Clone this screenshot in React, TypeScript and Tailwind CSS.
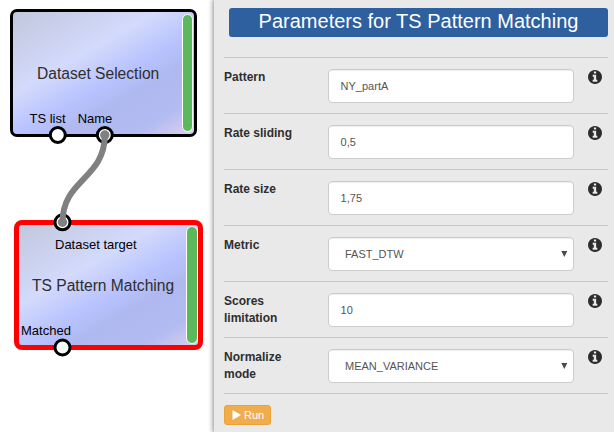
import type { ReactNode } from "react";

type FieldProps = { label: string; value: string; select?: boolean };

const fields: FieldProps[] = [
  { label: "Pattern", value: "NY_partA" },
  { label: "Rate sliding", value: "0,5" },
  { label: "Rate size", value: "1,75" },
  { label: "Metric", value: "FAST_DTW", select: true },
  { label: "Scores limitation", value: "10" },
  { label: "Normalize mode", value: "MEAN_VARIANCE", select: true },
];

function InfoIcon() {
  return (
    <svg className="size-[14px] shrink-0" viewBox="0 0 1536 1536" fill="#2d2d2d">
      <path d="M1024 1248v-160q0-14-9-23t-23-9h-96V544q0-14-9-23t-23-9H544q-14 0-23 9t-9 23v160q0 14 9 23t23 9h96v320h-96q-14 0-23 9t-9 23v160q0 14 9 23t23 9h448q14 0 23-9t9-23zM896 352V192q0-14-9-23t-23-9H672q-14 0-23 9t-9 23v160q0 14 9 23t23 9h192q14 0 23-9t9-23zm640 416q0 209-103 385.500T1153.500 1433 768 1536t-385.500-103T103 1153.500 0 768t103-385.500T382.500 103 768 0t385.500 103T1433 382.500 1536 768z" />
    </svg>
  );
}

function Field({ label, value, select }: FieldProps) {
  return (
    <div className="grid h-[56px] grid-cols-[104px_246px_34px] items-start border-t border-[#c8c8c8]">
      <div className="pt-[11px] pr-8 text-[12px] leading-[17px] font-bold">{label}</div>
      <div
        className={`mt-[11px] flex h-[34px] items-center justify-between rounded border border-[#ccc] bg-white text-[11px] text-[#555] shadow-[inset_0_1px_1px_rgba(0,0,0,0.075)] ${select ? "pr-[5px] pl-4" : "px-[11.600px]"}`}
      >
        <span>{value}</span>
        {select && (
          <svg className="mb-px h-[6px] w-[7px]" viewBox="0 0 7 6" fill="#4b4b4b">
            <path d="M0.300 0h6L3.300 6z" />
          </svg>
        )}
      </div>
      <div className="flex pt-[11.500px] pl-[14.300px]">
        <InfoIcon />
      </div>
    </div>
  );
}

function Node({ className, children }: { className: string; children: ReactNode }) {
  return (
    <div
      className={`absolute flex justify-between bg-[linear-gradient(150deg,#c0c6da_0%,#d3dafc_37%,#b8c2fe_55%,#afb9f0_66%,#b2bbf2_83%,#e3d3ea_100%)] bg-origin-border ${className}`}
    >
      {children}
    </div>
  );
}

export default function App() {
  return (
    <div className="flex h-[432px] w-[614px] overflow-hidden bg-white font-['Liberation_Sans',Arial,sans-serif] text-[#2e2e2e]">
      <main className="relative w-[214px] shrink-0">
        <Node className="top-[8.500px] left-[9.500px] h-[128px] w-[187px] rounded-[7px] border-[3px] border-black">
          <div className="flex flex-col pt-[50px] whitespace-nowrap">
            <span className="pl-[24.500px] text-[15.600px] leading-6">Dataset Selection</span>
            <div className="mt-[25px] flex gap-3 pl-[17px] text-[13px] leading-[15px] text-black">
              <span>TS list</span>
              <span>Name</span>
            </div>
          </div>
          <i className="mt-[2px] mr-px h-[118px] w-[11px] shrink-0 rounded-full border border-white bg-[#5cb85c]" />
        </Node>
        <Node className="top-[220px] left-[13.500px] h-[130px] w-[189px] rounded-[8px] border-[5px] border-[#ff0000]">
          <div className="flex flex-col pt-3 whitespace-nowrap">
            <span className="pl-[36.500px] text-[13px] leading-[15px] text-black">Dataset target</span>
            <span className="mt-[22px] pl-[13.500px] text-[15.600px] leading-6">TS Pattern Matching</span>
            <span className="mt-[25px] pl-[2.500px] text-[13px] leading-[15px] text-black">Matched</span>
          </div>
          <i className="mt-px h-[118px] w-[12px] shrink-0 rounded-full border border-white bg-[#5cb85c]" />
        </Node>
        <svg className="absolute inset-0" width="214" height="432" fill="none">
          <g stroke="#000" strokeWidth="3" fill="#fff">
            <circle cx="57.800" cy="135" r="7.500" />
            <circle cx="104.800" cy="135" r="7.500" />
            <circle cx="62.500" cy="222.300" r="7.500" />
            <circle cx="62.500" cy="347.500" r="7.500" fill="#f5fff5" />
          </g>
          <path d="M104.800 135C104.800 179 62.500 179 62.500 222.300" stroke="#808080" strokeWidth="6" />
          <circle cx="104.800" cy="135" r="4.700" fill="#808080" />
          <circle cx="62.500" cy="222.300" r="4.700" fill="#808080" />
        </svg>
      </main>
      <aside className="z-10 min-w-0 flex-1 bg-[#e9e9e9] pt-2 pr-[6px] pl-[10px] shadow-[0_0_5px_1px_rgba(0,0,0,0.45)]">
        <h1 className="ml-[5px] h-[29px] rounded-[3px] bg-[#2e5f9e] text-center text-[20px] leading-[26px] text-white">
          Parameters for TS Pattern Matching
        </h1>
        <div className="mt-5 border-b border-[#c8c8c8]">
          {fields.map((field) => (
            <Field key={field.label} {...field} />
          ))}
        </div>
        <button className="mt-[11px] flex h-5 w-[47px] items-center gap-[3px] rounded-[3px] border border-[#eea236] bg-[#f0ad4e] pl-[7px] text-[11px] leading-[18px] text-white">
          <svg width="9" height="10" viewBox="0 0 9 10" fill="currentColor">
            <path d="M0.500 0L9 5L0.500 10z" />
          </svg>
          Run
        </button>
      </aside>
    </div>
  );
}
